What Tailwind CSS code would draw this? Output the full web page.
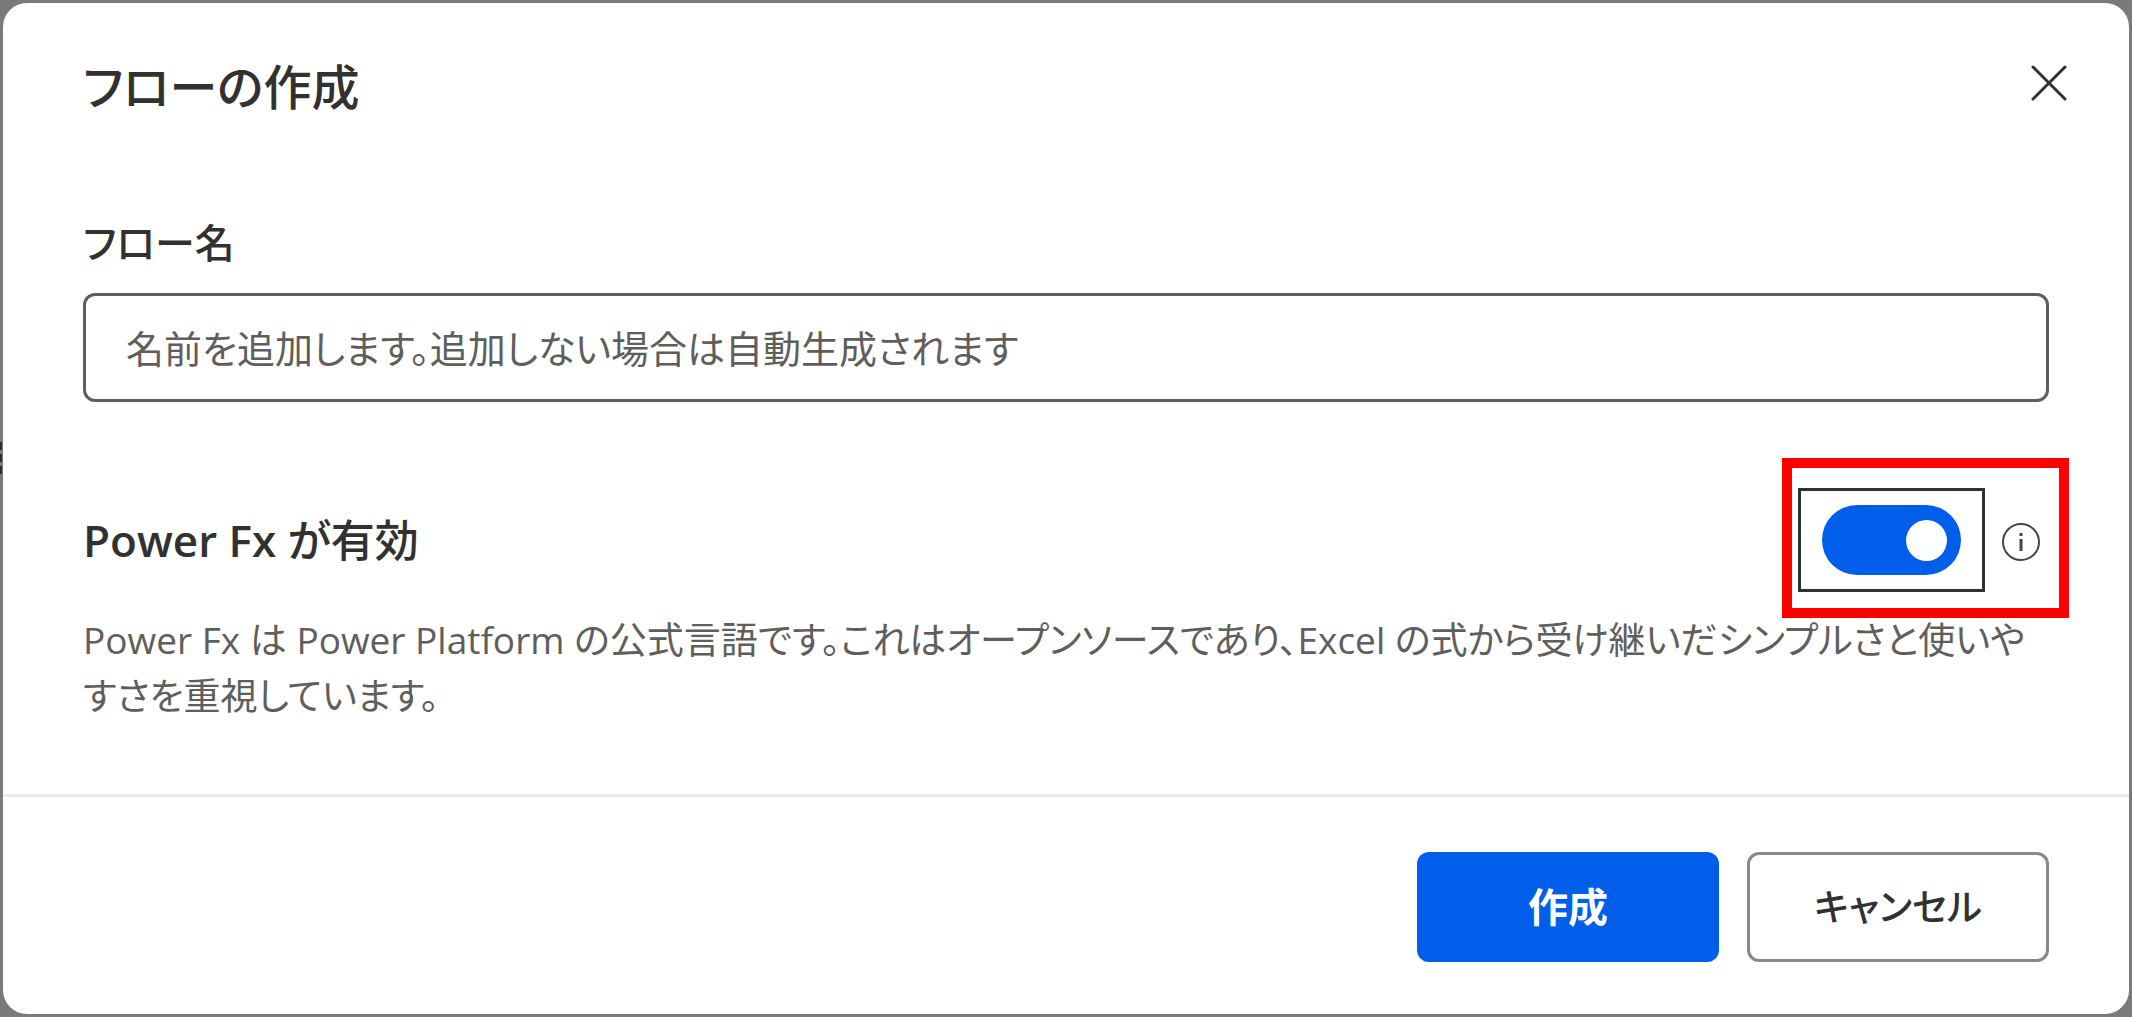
<!DOCTYPE html>
<html lang="ja">
<head>
    <meta charset="UTF-8">
    <meta name="viewport" content="width=device-width, initial-scale=1.0">
    <title>フローの作成</title>
    <script src="https://cdn.jsdelivr.net/npm/@tailwindcss/browser@4"></script>
    <style>
        body {
            font-family: 'Open Sans', 'Noto Sans CJK JP', sans-serif;
            font-feature-settings: 'palt';
        }
    </style>
</head>
<body class="relative min-h-screen flex bg-[#7a7a7a] p-[3px] text-[#323130]">
    <!-- Edge of the page behind the dialog -->
    <div class="absolute left-0 top-[442px] w-[2px] flex flex-col gap-1" aria-hidden="true">
        <span class="h-2 bg-[#2b2b2b]"></span>
        <span class="h-2 bg-[#2b2b2b]"></span>
        <span class="h-2 bg-[#2b2b2b]"></span>
    </div>

    <form role="dialog" aria-labelledby="title" class="flex-1 flex flex-col bg-white rounded-3xl" onsubmit="return false">
        <div class="flex-1 px-20 pt-12">
            <header class="flex justify-between items-start">
                <h1 id="title" class="text-[48px] leading-[72px] font-medium">フローの作成</h1>
                <button type="button" aria-label="閉じる" class="-mr-5 mt-3">
                    <svg class="size-10" viewBox="0 0 40 40" fill="none" stroke="#323130" stroke-width="3" stroke-linecap="round">
                        <path d="M4 4l32 32M36 4L4 36"/>
                    </svg>
                </button>
            </header>

            <label for="flowName" class="block mt-[88px] text-[40px] leading-[64px] font-medium">フロー名</label>
            <input id="flowName" type="text" placeholder="名前を追加します。追加しない場合は自動生成されます"
                class="block w-full h-[109px] mt-[18px] px-10 border-3 border-[#605e5c] rounded-xl text-[38px] placeholder:text-[#605e5c]">

            <div class="flex justify-between items-center mt-[86px]">
                <label for="powerFx" class="text-[44px] leading-[64px] font-medium"><span class="font-semibold">Power Fx</span> が有効</label>
                <div class="relative flex items-center gap-4 pr-2">
                    <div class="border-3 border-[#323130] px-[21px] py-[14px]">
                        <input id="powerFx" type="checkbox" role="switch" checked
                            class="peer sr-only">
                        <label for="powerFx" aria-label="Power Fx" class="flex items-center w-[139px] h-[70px] px-[14px] rounded-full bg-gray-400 peer-checked:bg-[#005eea] peer-checked:justify-end">
                            <span class="size-[41px] rounded-full bg-white"></span>
                        </label>
                    </div>
                    <svg class="size-10 mt-1" viewBox="0 0 40 40" fill="none" stroke="#484644" stroke-width="2">
                        <circle cx="20" cy="20" r="18"/>
                        <path d="M20 17v12M20 11v3" stroke-width="3"/>
                    </svg>
                    <!-- Highlight -->
                    <div class="absolute -left-4 -right-5 -top-[30px] -bottom-[26px] border-10 border-[#ff0000] pointer-events-none"></div>
                </div>
            </div>

            <p class="mt-[20px] pb-[68px] text-[37px] leading-[56px] text-[#605e5c]">Power Fx は Power Platform の公式言語です。これはオープンソースであり、Excel の式から受け継いだシンプルさと使いや<br>すさを重視しています。</p>
        </div>

        <footer class="flex justify-end gap-7 px-20 pt-[55px] pb-[52px] border-t-3 border-[#edebe9]">
            <button type="submit" class="w-[302px] h-[110px] rounded-xl bg-[#005eea] text-white text-[40px] font-bold">作成</button>
            <button type="button" class="w-[302px] h-[110px] rounded-xl border-3 border-[#8a8886] text-[37px] font-medium">キャンセル</button>
        </footer>
    </form>
</body>
</html>
